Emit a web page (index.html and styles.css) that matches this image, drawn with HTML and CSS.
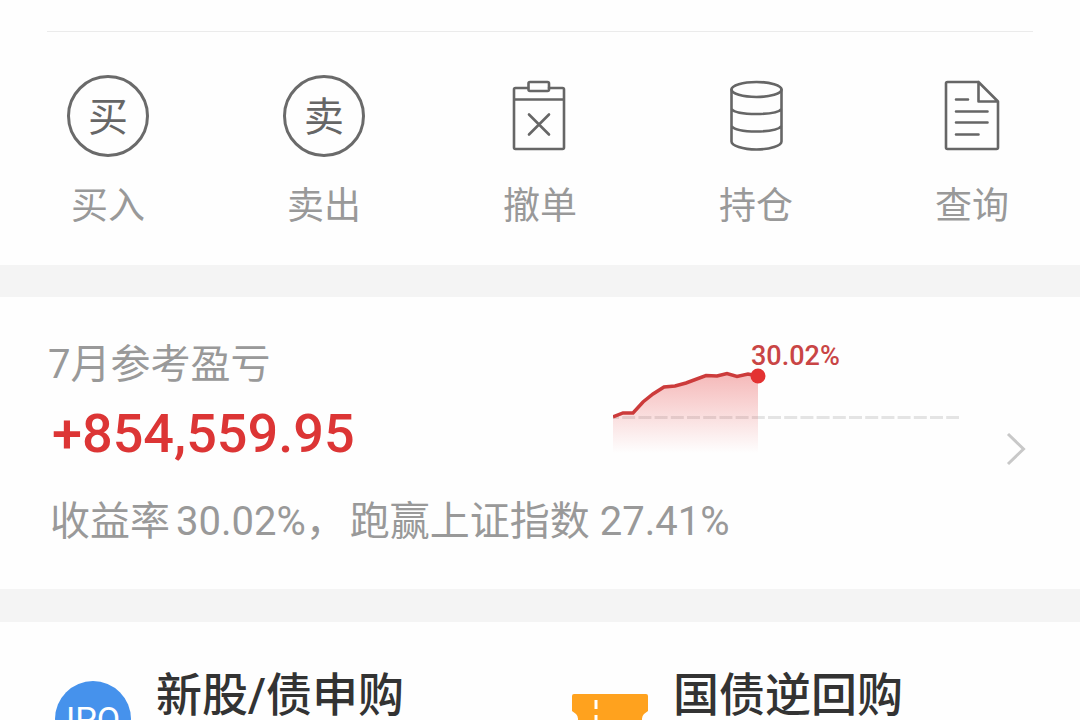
FILE: index.html
```html
<!DOCTYPE html>
<html lang="zh-CN">
<head>
    <meta charset="UTF-8">
    <meta name="viewport" content="width=device-width, initial-scale=1.0">
    <title>交易</title>
    <link rel="stylesheet" href="styles.css">
</head>
<body>
    <!-- 交易入口 -->
    <nav class="trade">
        <ul class="actions">
            <li>
                <a href="#buy" class="action">
                    <span class="icon-circle" aria-hidden="true">买</span>
                    <span>买入</span>
                </a>
            </li>
            <li>
                <a href="#sell" class="action">
                    <span class="icon-circle" aria-hidden="true">卖</span>
                    <span>卖出</span>
                </a>
            </li>
            <li>
                <a href="#cancel" class="action">
                    <svg class="icon" viewBox="0 0 82 82" aria-hidden="true">
                        <path d="M29 13H16.500a1.500 1.500 0 0 0-1.500 1.500v58a1.500 1.500 0 0 0 1.500 1.500h47a1.500 1.500 0 0 0 1.500-1.500v-58a1.500 1.500 0 0 0-1.500-1.500H50M15 24.500h50"/>
                        <rect x="29.500" y="7" width="20.500" height="9" rx="1.500"/>
                        <path d="M30 39.500l20 20M50 39.500L30 59.500"/>
                    </svg>
                    <span>撤单</span>
                </a>
            </li>
            <li>
                <a href="#position" class="action">
                    <svg class="icon" viewBox="0 0 82 82" aria-hidden="true">
                        <ellipse cx="41.500" cy="14.500" rx="25" ry="7.500"/>
                        <path d="M16.500 14.500v52c0 4 11 8 25 8s25-4 25-8v-52M16.500 34c3 4 13 5 25 5s22-1 25-5M16.500 51c3 4 13 5.500 25 5.500s22-1.500 25-5.500"/>
                    </svg>
                    <span>持仓</span>
                </a>
            </li>
            <li>
                <a href="#query" class="action">
                    <svg class="icon" viewBox="0 0 82 82" aria-hidden="true">
                        <path d="M47.500 7H16.500a1.500 1.500 0 0 0-1.500 1.500v64a1.500 1.500 0 0 0 1.500 1.500h49a1.500 1.500 0 0 0 1.500-1.500V26.500L47.500 7V26.500h19.500"/>
                        <path d="M25 24.500h12M25 36.500h31.500M25 47.500h31.500M25 59.500h22.500"/>
                    </svg>
                    <span>查询</span>
                </a>
            </li>
        </ul>
    </nav>

    <!-- 月度盈亏 -->
    <a href="#profit" class="profit">
        <div class="profit-body">
            <h2 class="profit-title">7月参考盈亏</h2>
            <p class="amount">+854,559.95</p>
            <svg class="chart" viewBox="0 0 346 120" role="img" aria-label="收益率走势">
                <defs>
                    <linearGradient id="area" x1="0" y1="0" x2="0" y2="1">
                        <stop offset="0" stop-color="#e33232" stop-opacity="0.34"/>
                        <stop offset="1" stop-color="#e33232" stop-opacity="0"/>
                    </linearGradient>
                </defs>
                <path class="chart-base" d="M0 82.500H346"/>
                <path fill="url(#area)" d="M0 82L10 78L20 78L30 67L40 59L51 52L62 51L73 48L93 40.500L104 41L114 38.500L124 41.500L135 39L145 41V118H0Z"/>
                <path class="chart-line" d="M0 82L10 78L20 78L30 67L40 59L51 52L62 51L73 48L93 40.500L104 41L114 38.500L124 41.500L135 39L145 41"/>
                <circle class="chart-dot" cx="145" cy="41" r="7.500"/>
                <text class="chart-text" x="138" y="30">30.02%</text>
            </svg>
            <p class="rate">收益率<span class="num">30.02%，</span>跑赢上证指数 27.41%</p>
        </div>
        <svg class="arrow" viewBox="0 0 20 34" aria-hidden="true">
            <path d="M2 2L17.500 17L2 32"/>
        </svg>
    </a>

    <!-- 业务入口 -->
    <section class="services">
        <a href="#ipo" class="service">
            <span class="ipo" aria-hidden="true">IPO</span>
            <span class="service-name">新股/债申购</span>
        </a>
        <a href="#repo" class="service">
            <svg class="ticket" viewBox="0 0 76 76" aria-hidden="true">
                <path fill="#ffa21e" d="M2 13h72a2 2 0 0 1 2 2v15l-4 3a7 7 0 0 0 0 10l4 3v15a2 2 0 0 1-2 2H2a2 2 0 0 1-2-2V46l4-3a7 7 0 0 0 0-10l-4-3V15a2 2 0 0 1 2-2z"/>
                <path stroke="#fff" stroke-width="3" stroke-dasharray="9 6" d="M24 19v39"/>
            </svg>
            <span class="service-name">国债逆回购</span>
        </a>
    </section>
</body>
</html>
```

FILE: styles.css
```css
* {
    margin: 0;
    padding: 0;
    box-sizing: border-box;
}
body {
    font-family: Roboto, "Noto Sans CJK SC", sans-serif;
    background: #fefefe;
    color: #999;
}
a {
    color: inherit;
    text-decoration: none;
}
/* 交易入口 */
.trade {
    padding-top: 31px;
    border-bottom: 32px solid #f4f4f4;
}
.trade::before {
    content: "";
    display: block;
    height: 1px;
    margin: 0 47px;
    background: #ebebeb;
}
.actions {
    display: grid;
    grid-template-columns: repeat(5, 1fr);
    list-style: none;
    padding: 43px 0 30px;
}
.action {
    display: flex;
    flex-direction: column;
    align-items: center;
    gap: 22px;
    font-size: 37px;
    line-height: 56px;
}
.icon,
.icon-circle {
    width: 82px;
    height: 82px;
}
.icon {
    fill: none;
    stroke: #666;
    stroke-width: 2.6;
    stroke-linecap: round;
    stroke-linejoin: round;
}
.icon-circle {
    display: flex;
    justify-content: center;
    align-items: center;
    padding-top: 4px;
    border: 3px solid #6a6a6a;
    border-radius: 50%;
    color: #666;
    font-size: 40px;
}
/* 月度盈亏 */
.profit {
    display: flex;
    align-items: center;
    gap: 47px;
    padding: 38px 54px 37px 48px;
    border-bottom: 33px solid #f4f4f4;
}
.profit-body {
    flex: 1;
    display: grid;
    grid-template-columns: 1fr 346px;
}
.profit-title {
    font-size: 40px;
    font-weight: 400;
    line-height: 60px;
}
.amount {
    padding-left: 4px;
    color: #dc3535;
    font-size: 54px;
    font-weight: 500;
    line-height: 78px;
}
.chart {
    grid-column: 2;
    grid-row: 1 / 3;
    width: 100%;
}
.chart-base {
    stroke: #e4e4e4;
    stroke-width: 3;
    stroke-dasharray: 13 3.2;
    stroke-dashoffset: 7;
}
.chart-line {
    fill: none;
    stroke: #cc3b3b;
    stroke-width: 3.5;
}
.chart-dot {
    fill: #e33232;
}
.chart-text {
    fill: #c94545;
    font-size: 27px;
    font-weight: 500;
}
.rate {
    grid-column: 1 / 3;
    margin-top: 19px;
    padding-left: 2px;
    font-size: 40px;
    line-height: 60px;
}
.num {
    margin: 0 4px 0 6px;
}
.arrow {
    width: 20px;
    height: 34px;
    margin-top: 10px;
    fill: none;
    stroke: #c8c8c8;
    stroke-width: 3;
}
/* 业务入口 */
.services {
    display: grid;
    grid-template-columns: 517px 1fr;
    padding: 40px 0 40px 55px;
}
.service {
    display: flex;
    align-items: flex-start;
    gap: 25px;
}
.ipo,
.ticket {
    width: 76px;
    height: 76px;
    margin-top: 19px;
}
.ipo {
    display: flex;
    justify-content: center;
    align-items: center;
    border-radius: 50%;
    background: #4692ec;
    color: #fff;
    font-size: 34px;
    font-weight: 400;
}
.ticket {
    fill: none;
}
.service-name {
    color: #333;
    font-size: 46px;
    font-weight: 500;
    line-height: 66px;
}
```
